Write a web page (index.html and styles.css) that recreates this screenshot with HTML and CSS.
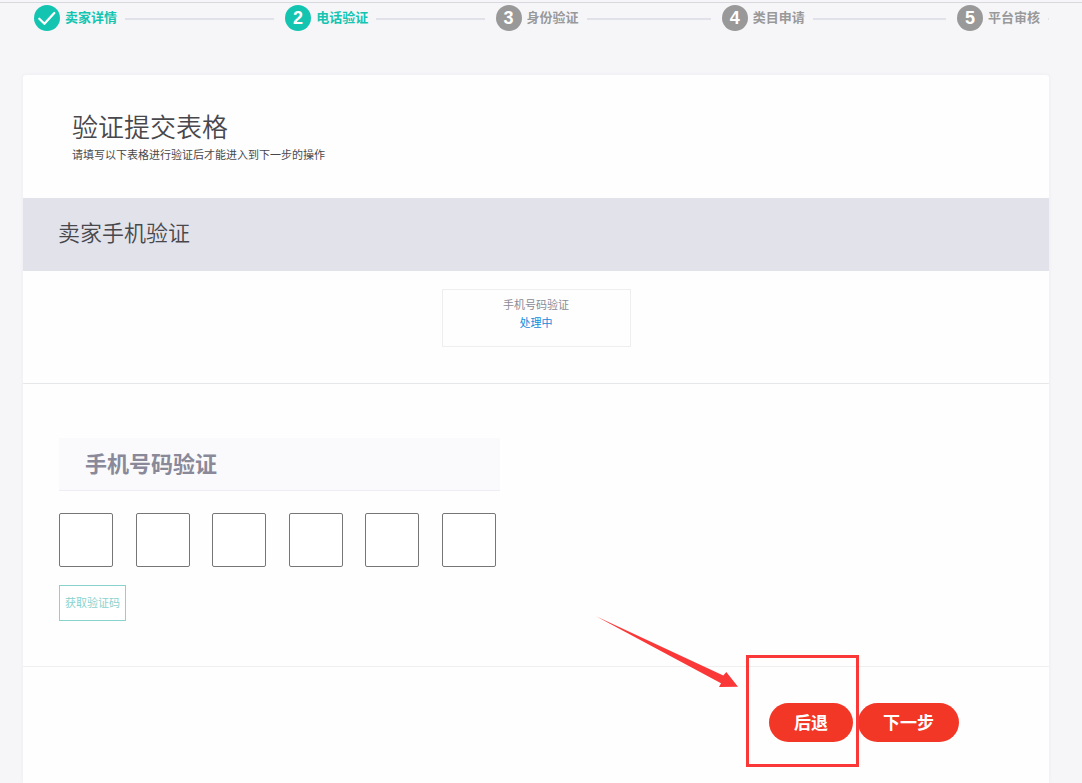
FILE: index.html
```html
<!DOCTYPE html>
<html lang="zh-CN">
<head>
<meta charset="utf-8">
<meta name="viewport" content="width=device-width, initial-scale=1">
<title>卖家手机验证</title>
<link rel="stylesheet" href="styles.css">
</head>
<body>
<ol class="steps">
  <li class="step step-first is-active">
    <svg class="step-badge" viewBox="0 0 26 26" aria-hidden="true"><path d="M5.300 13.800L10.400 18.800L20.300 8" fill="none" stroke="#fff" stroke-width="2.300" stroke-linecap="round" stroke-linejoin="round"/></svg>
    <span class="step-label">卖家详情</span>
    <span class="step-line"></span>
  </li>
  <li class="step step-second is-active" aria-current="step">
    <span class="step-badge">2</span>
    <span class="step-label">电话验证</span>
    <span class="step-line"></span>
  </li>
  <li class="step step-third">
    <span class="step-badge">3</span>
    <span class="step-label">身份验证</span>
    <span class="step-line"></span>
  </li>
  <li class="step step-fourth">
    <span class="step-badge">4</span>
    <span class="step-label">类目申请</span>
    <span class="step-line"></span>
  </li>
  <li class="step step-last">
    <span class="step-badge">5</span>
    <span class="step-label">平台审核</span>
    <span class="step-line"></span>
  </li>
</ol>

<main class="card">
  <header class="card-header">
    <h1 class="title">验证提交表格</h1>
    <p class="subtitle">请填写以下表格进行验证后才能进入到下一步的操作</p>
  </header>
  <h2 class="band">卖家手机验证</h2>
  <section class="status">
    <div class="status-box">
      <div>手机号码验证</div>
      <div class="status-value">处理中</div>
    </div>
  </section>
  <form class="form">
    <section class="verify">
      <h3 class="verify-title">手机号码验证</h3>
      <div class="code">
        <input class="digit" type="text" maxlength="1" inputmode="numeric" aria-label="验证码第1位">
        <input class="digit" type="text" maxlength="1" inputmode="numeric" aria-label="验证码第2位">
        <input class="digit" type="text" maxlength="1" inputmode="numeric" aria-label="验证码第3位">
        <input class="digit" type="text" maxlength="1" inputmode="numeric" aria-label="验证码第4位">
        <input class="digit" type="text" maxlength="1" inputmode="numeric" aria-label="验证码第5位">
        <input class="digit" type="text" maxlength="1" inputmode="numeric" aria-label="验证码第6位">
      </div>
      <button class="get-code" type="button">获取验证码</button>
    </section>
    <div class="actions">
      <div class="actions-group">
        <button class="btn" type="button">后退</button>
        <button class="btn" type="submit">下一步</button>
        <span class="highlight"></span>
        <svg class="arrow" viewBox="0 0 142 72" aria-hidden="true"><path d="M0 0.300L127.300 59.500L130.300 56L142 70.800L123 71L125 67.300Z" fill="#fb3838"/></svg>
      </div>
    </div>
  </form>
</main>
</body>
</html>
```

FILE: styles.css
```css
* {
  box-sizing: border-box;
}

body {
  display: flex;
  flex-direction: column;
  min-height: 100vh;
  margin: 0;
  background: #f6f6f9;
  color: #48484c;
  font-family: "Liberation Sans", "Noto Sans CJK SC", sans-serif;
  font-size: 11px;
}

h1,
h2,
h3,
p {
  margin: 0;
}

button,
input {
  font-family: inherit;
}

.steps {
  display: flex;
  margin: 2px 0 0;
  padding: 2px 33px 44px 34px;
  border-top: 1px solid #d8d8df;
  list-style: none;
}

.step {
  display: flex;
  flex: 1 1 auto;
  align-items: center;
  color: #999;
}

.step-first {
  flex-grow: 150;
}

.step-second {
  flex-grow: 109;
}

.step-third {
  flex-grow: 125;
}

.step-fourth {
  flex-grow: 134;
}

.step-badge {
  display: flex;
  flex: none;
  align-items: center;
  justify-content: center;
  width: 26px;
  height: 26px;
  border-radius: 50%;
  background: #999;
  color: #fff;
  font-size: 18px;
  font-weight: 700;
  line-height: 26px;
}

.step-label {
  margin: 0 8px 0 5px;
  font-size: 13px;
  font-weight: 700;
  line-height: 20px;
  white-space: nowrap;
}

.step-line {
  flex: 1;
  height: 2px;
  margin: 2px 11px 0 0;
  background: #e1e1ea;
}

.step-last .step-line {
  margin-right: 0;
}

.is-active {
  color: #13c5b1;
}

.is-active .step-badge {
  background: #13c5b1;
}

.is-active span.step-badge {
  color: #fff;
}

.card {
  flex: 1;
  margin: 0 33px 0 23px;
  border-radius: 3px 3px 0 0;
  background: #fefefe;
  box-shadow: 0 0 4px rgba(60, 60, 90, 0.05);
}

.card-header {
  padding: 34px 49px;
}

.title {
  font-size: 26px;
  font-weight: 350;
  line-height: 38px;
}

.subtitle {
  line-height: 17px;
}

.band {
  padding: 17px 36px 19px 35px;
  background: #e2e2eb;
  font-size: 22px;
  font-weight: 350;
  line-height: 37px;
}

.status {
  padding: 18px 20px 36px;
  border-bottom: 1px solid #e6e7e9;
}

.status-box {
  width: 189px;
  height: 58px;
  margin: 0 auto;
  padding: 6px;
  border: 1px solid #eeeeef;
  color: #8b8b96;
  line-height: 18px;
  text-align: center;
}

.status-value {
  color: #168cdb;
}

.verify {
  padding: 54px 36px 45px;
  border-bottom: 1px solid #efeff1;
}

.verify-title {
  max-width: 441px;
  padding: 9px 26px 7px;
  border-bottom: 1px solid #eeedf6;
  background: #fafafc;
  color: #898999;
  font-size: 22px;
  font-weight: 700;
  line-height: 36px;
}

.code {
  display: flex;
  justify-content: space-between;
  max-width: 437px;
  margin: 22px 0 18px;
}

.digit {
  width: 54px;
  height: 54px;
  padding: 0;
  border: 1px solid #767676;
  border-radius: 2px;
  background: #fff;
  font-size: 22px;
  text-align: center;
}

.get-code {
  display: block;
  height: 36px;
  padding: 0 5px 2px;
  border: 1px solid #89d2ce;
  background: #fff;
  color: #89d2ce;
  font-size: 11px;
}

.actions {
  display: flex;
  justify-content: flex-end;
  padding: 36px 90px 40px;
}

.actions-group {
  display: flex;
  position: relative;
  gap: 5px;
}

.btn {
  height: 39px;
  padding: 0 25px 2px;
  border: 0;
  border-radius: 20px;
  background: #f23726;
  color: #fff;
  font-size: 17px;
  font-weight: 700;
}

.highlight {
  position: absolute;
  top: -48px;
  left: -23px;
  width: 113px;
  height: 112px;
  border: 3px solid #fb3838;
  pointer-events: none;
}

.arrow {
  position: absolute;
  top: -87px;
  left: -173px;
  width: 142px;
  height: 72px;
  pointer-events: none;
}
```
